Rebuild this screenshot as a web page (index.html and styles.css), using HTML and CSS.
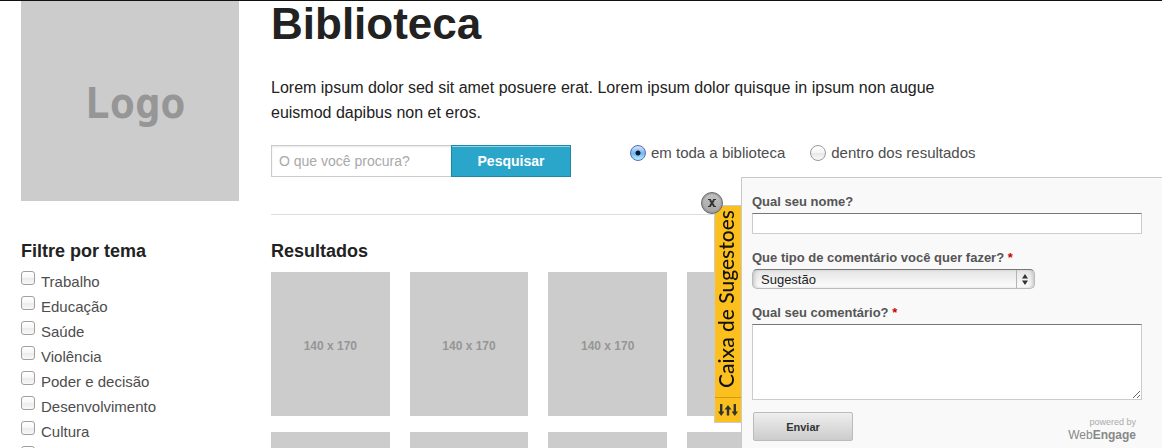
FILE: index.html
```html
<!DOCTYPE html>
<html lang="pt-br">
<head>
  <meta charset="utf-8">
  <title>Biblioteca</title>
  <link rel="stylesheet" href="styles.css">
</head>
<body>
  <div class="topbar"></div>
  <div class="page">
    <aside class="sidebar">
      <div class="logo">Logo</div>
      <h3>Filtre por tema</h3>
      <ul class="filters">
        <li><label><input type="checkbox"> Trabalho</label></li>
        <li><label><input type="checkbox"> Educação</label></li>
        <li><label><input type="checkbox"> Saúde</label></li>
        <li><label><input type="checkbox"> Violência</label></li>
        <li><label><input type="checkbox"> Poder e decisão</label></li>
        <li><label><input type="checkbox"> Desenvolvimento</label></li>
        <li><label><input type="checkbox"> Cultura</label></li>
        <li><label><input type="checkbox" aria-label="Tema"></label></li>
      </ul>
    </aside>

    <main class="content">
      <h1>Biblioteca</h1>
      <p class="intro">Lorem ipsum dolor sed sit amet posuere erat. Lorem ipsum dolor quisque in ipsum non augue euismod dapibus non et eros.</p>
      <form class="search">
        <div class="search-box">
          <input type="text" placeholder="O que você procura?" aria-label="O que você procura?">
          <button type="button">Pesquisar</button>
        </div>
        <div class="scope">
          <label><input type="radio" name="scope" checked> em toda a biblioteca</label>
          <label><input type="radio" name="scope"> dentro dos resultados</label>
        </div>
      </form>
      <h3>Resultados</h3>
      <div class="results">
        <div class="thumb">140 x 170</div>
        <div class="thumb">140 x 170</div>
        <div class="thumb">140 x 170</div>
        <div class="thumb"></div>
        <div class="thumb"></div>
        <div class="thumb"></div>
        <div class="thumb"></div>
        <div class="thumb"></div>
        <div class="thumb"></div>
        <div class="thumb"></div>
        <div class="thumb"></div>
        <div class="thumb"></div>
      </div>
    </main>
  </div>

  <!-- feedback widget -->
  <div class="feedback">
    <div class="tab">
      <div class="tab-text">Caixa de Sugestoes</div>
      <div class="tab-icon">
        <svg width="20" height="14" viewBox="0 0 20 14" fill="#333">
          <path d="M2 1h2.400v7.500h2L3.200 13 0 8.500h2z"/>
          <path d="M8.800 12.500h2.400V6.500h2.300L10 2 6.500 6.500h2.300z"/>
          <path d="M15.600 1H18v7.500h2L16.800 13l-3.200-4.500h2z"/>
        </svg>
      </div>
    </div>
    <button class="close" type="button" aria-label="Fechar">
      <svg width="10" height="10" viewBox="0 0 10 10" stroke="#333" fill="none">
        <path d="M3 2l4 6M7 2L3 8" stroke-width="2"/>
        <path d="M1 1.500h3M6 1.500h3M1 8.500h3M6 8.500h3"/>
      </svg>
    </button>
    <form>
      <label for="nome">Qual seu nome?</label>
      <input type="text" id="nome">
      <label for="tipo">Que tipo de comentário você quer fazer? <span class="req">*</span></label>
      <div class="select-wrap">
        <select id="tipo">
          <option>Sugestão</option>
        </select>
        <svg class="arrows" width="18" height="18" viewBox="0 0 18 18">
          <path d="M.5 0v18" stroke="#b4b4b4"/>
          <path d="M9 4l3 4.500H6zM9 15l3-4.500H6z" fill="#333"/>
        </svg>
      </div>
      <label for="comentario">Qual seu comentário? <span class="req">*</span></label>
      <textarea id="comentario"></textarea>
      <div class="form-footer">
        <button class="send" type="button">Enviar</button>
        <a href="#" class="powered">
          <span>powered by</span>
          <span class="brand">Web<b>Engage</b></span>
        </a>
      </div>
    </form>
  </div>
</body>
</html>
```
FILE: styles.css
```css
* {
  box-sizing: border-box;
}

body {
  margin: 0;
  font-family: "Liberation Sans", Arial, sans-serif;
  font-size: 15px;
  color: #222;
  background: #fff;
}

.topbar {
  height: 1px;
  background: #111;
}

.page {
  display: flex;
  gap: 32px;
  max-width: 1083px;
  padding-left: 21px;
}

/* left column */
.sidebar {
  flex: 0 0 218px;
}

.logo {
  display: flex;
  align-items: center;
  justify-content: center;
  height: 200px;
  margin-bottom: 39px;
  padding: 4px 0 0 10px;
  background: #ccc;
  color: #969696;
  font-family: "DejaVu Sans Mono", monospace;
  font-size: 42px;
  font-weight: bold;
}

h3 {
  margin: 0;
  font-size: 18px;
  line-height: 22px;
}

.filters {
  list-style: none;
  margin: 7px 0 0;
  padding: 0;
  color: #4d4d4d;
  line-height: 25px;
}

.filters label {
  display: flex;
  gap: 6px;
  height: 25px;
}

.filters input {
  appearance: none;
  width: 14px;
  height: 14px;
  margin: 2px 0 0;
  border: 1px solid #a0a0a0;
  border-radius: 3px;
  background: linear-gradient(#fff, #f6f6f6 50%, #ebebeb 50%, #f8f8f8);
}

/* right column */
.content {
  flex: 1;
}

h1 {
  margin: 0;
  font-size: 44px;
  line-height: 46px;
}

.intro {
  max-width: 718px;
  margin: 28px 0 20px;
  font-size: 16px;
  line-height: 25px;
}

.search {
  display: flex;
  gap: 59px;
  margin-bottom: 25px;
  padding-bottom: 37px;
  border-bottom: 1px solid #ddd;
}

.search-box {
  display: flex;
}

.search-box input {
  width: 180px;
  height: 32px;
  padding: 0 7px;
  border: 1px solid #ccc;
  border-right: 0;
  box-shadow: inset 0 1px 2px rgba(0, 0, 0, 0.1);
  font: 14px "Liberation Sans", Arial, sans-serif;
}

.search-box input::placeholder {
  color: #a9a9a9;
}

.search-box button {
  width: 120px;
  height: 32px;
  padding: 0;
  border: 1px solid #1e88a8;
  background: #2ba6cb;
  box-shadow: inset 0 1px 0 rgba(255, 255, 255, 0.5);
  color: #fff;
  font: bold 14px "Liberation Sans", Arial, sans-serif;
}

.scope {
  display: flex;
  gap: 25px;
  color: #4d4d4d;
  line-height: 16px;
}

.scope label {
  display: flex;
  gap: 5px;
  height: 16px;
}

.scope input {
  appearance: none;
  width: 16px;
  height: 16px;
  margin: 0;
  border: 1px solid #999;
  border-radius: 50%;
  background: linear-gradient(#fff, #f5f5f5 50%, #e6e6e6 50%, #fafafa);
}

.scope input:checked {
  border-color: #5a6ab0;
  background: radial-gradient(circle, #0a1a30 0 2px, transparent 3px), linear-gradient(#d4e6fa, #79b8f2 50%, #6db4f2 50%, #b8f0ff);
}

.results {
  display: grid;
  grid-template-columns: repeat(6, 1fr);
  grid-auto-rows: 144px;
  gap: 16px 20px;
  margin-top: 10px;
}

.thumb {
  display: flex;
  align-items: center;
  justify-content: center;
  padding-top: 3px;
  background: #ccc;
  color: #969696;
  font-size: 12px;
  font-weight: bold;
}

/* feedback widget */
.feedback {
  position: fixed;
  right: 0;
  bottom: 0;
  width: 421px;
  padding: 16px 20px 6px 10px;
  border: 1px solid #c8c8c8;
  border-width: 1px 0 0 1px;
  background: #f9f9f9;
  color: #555;
  font-size: 13px;
}

.tab {
  position: absolute;
  top: 27px;
  right: 100%;
  width: 28px;
  border: 1px solid #ccc;
  background: #fbc01e;
}

.tab-text {
  height: 191px;
  padding: 9px 0;
  writing-mode: vertical-rl;
  transform: rotate(180deg);
  color: #111;
  font-family: Lato, sans-serif;
  font-size: 21px;
  font-weight: 500;
  line-height: 22px;
  white-space: nowrap;
}

.tab-icon {
  display: flex;
  align-items: center;
  justify-content: center;
  height: 25px;
  border-top: 1px solid #d29a10;
}

.close {
  position: absolute;
  top: 14px;
  left: -41px;
  display: flex;
  align-items: center;
  justify-content: center;
  width: 22px;
  height: 22px;
  padding: 0;
  border: 1px solid #666;
  border-radius: 50%;
  background: linear-gradient(#c4c4c4, #a4a4a4);
  box-shadow: inset 0 0 1px 1px #999;
}

.feedback label {
  display: block;
  margin-bottom: 3px;
  font-weight: bold;
  line-height: 16px;
}

.req {
  color: #c00;
}

.feedback input,
.feedback textarea {
  display: block;
  width: 100%;
  margin: 0 0 16px;
  border: 1px solid #ccc;
  border-top-color: #777;
  background: #fff;
}

.feedback input {
  height: 21px;
}

.feedback textarea {
  height: 76px;
  margin-bottom: 12px;
}

.select-wrap {
  position: relative;
  width: 283px;
  margin-bottom: 16px;
}

.select-wrap select {
  appearance: none;
  display: block;
  width: 100%;
  height: 20px;
  padding: 0 24px 0 8px;
  border: 1px solid #bbb;
  border-top-color: #777;
  border-radius: 5px;
  background: linear-gradient(#e6e6e6, #f0f0f0 50%, #fff);
  box-shadow: inset 3px 0 4px -2px #bbb, inset -3px 0 4px -2px #bbb;
  color: #222;
  font: 13px "Liberation Sans", Arial, sans-serif;
}

.arrows {
  position: absolute;
  top: 1px;
  right: 1px;
  pointer-events: none;
}

.form-footer {
  display: flex;
  justify-content: space-between;
  padding: 0 6px 0 1px;
}

.send {
  width: 100px;
  height: 29px;
  padding: 0;
  border: 1px solid #bbb;
  border-radius: 2px;
  background: linear-gradient(#eee, #ccc);
  color: #333;
  font: bold 11px "Liberation Sans", Arial, sans-serif;
}

.powered {
  display: flex;
  flex-direction: column;
  align-items: flex-end;
  padding-top: 4px;
  color: #aaa;
  font-size: 9px;
  line-height: 12px;
  text-decoration: none;
}

.brand {
  color: #888;
  font-size: 12px;
  line-height: 14px;
}
```
